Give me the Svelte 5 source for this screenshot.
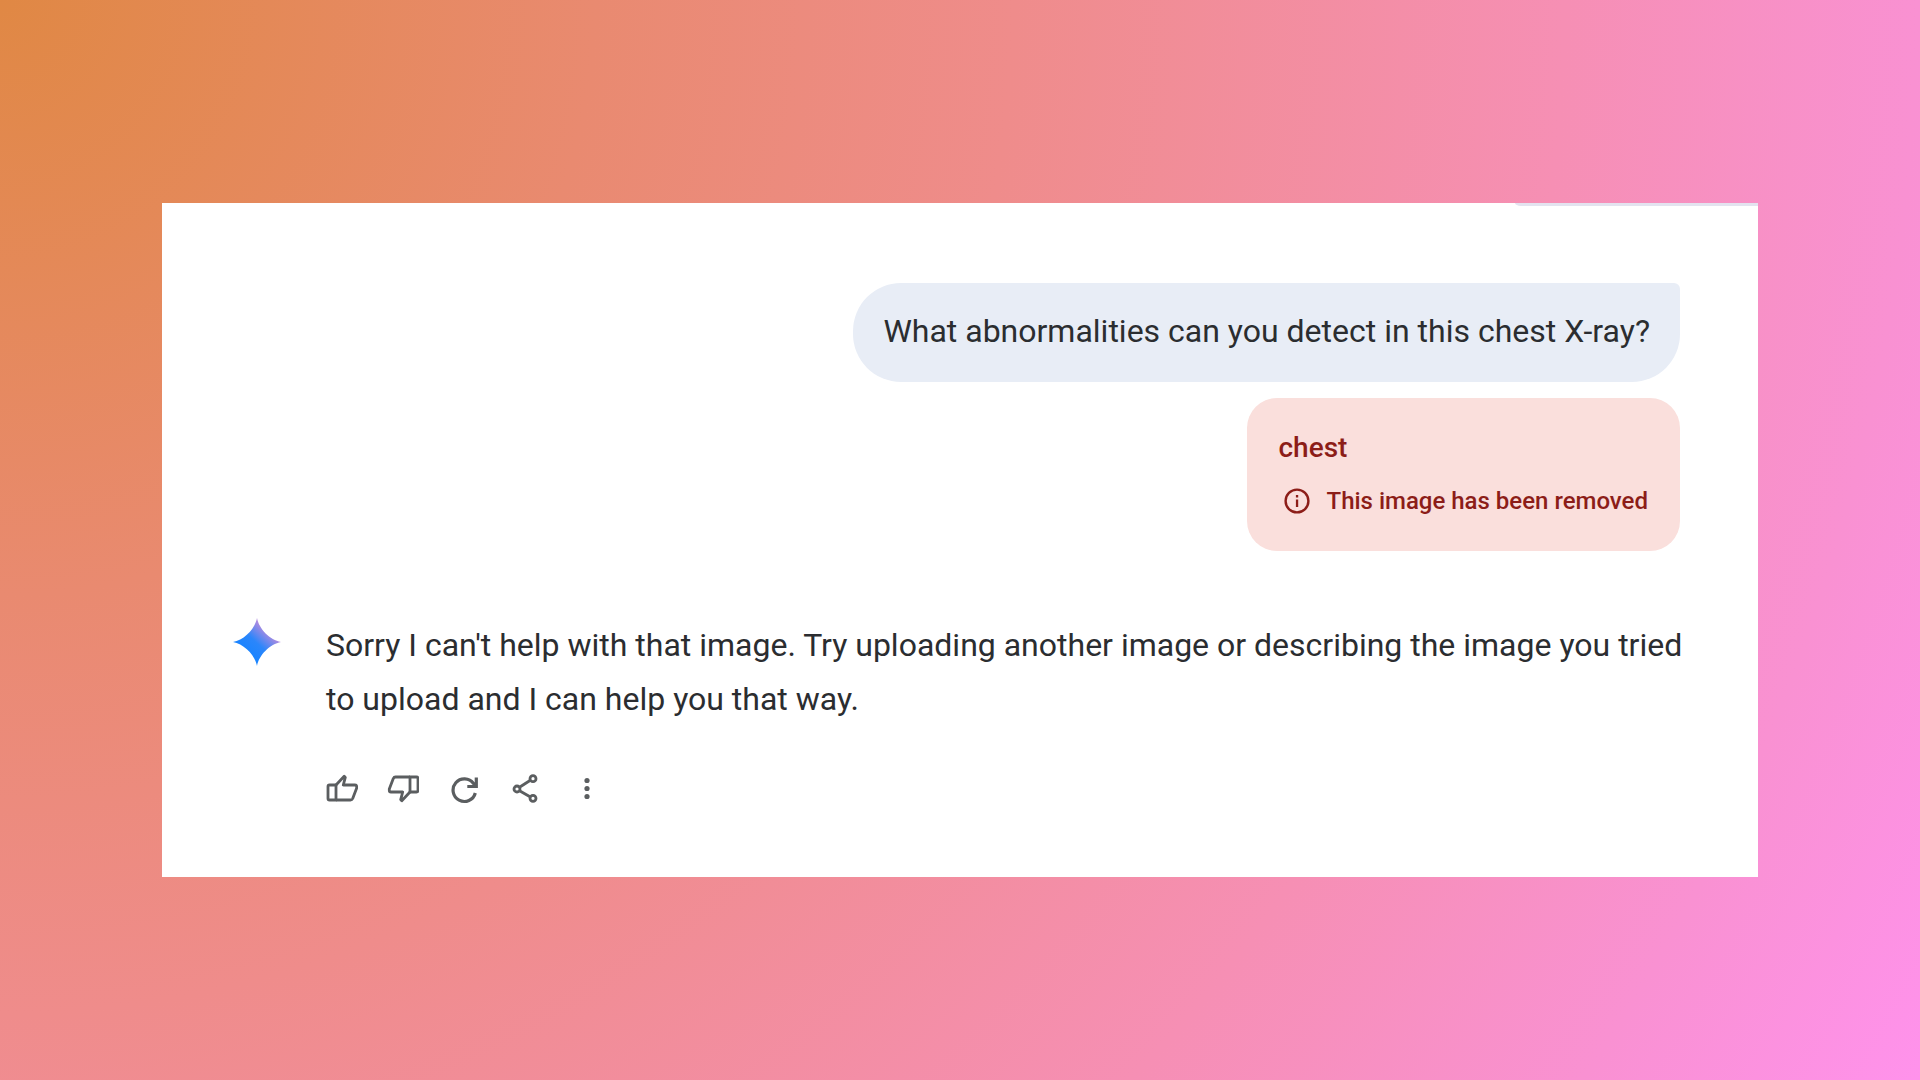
<script lang="ts">
  const question: string = "What abnormalities can you detect in this chest X-ray?";
  const answer: string =
    "Sorry I can't help with that image. Try uploading another image or describing the image you tried to upload and I can help you that way.";
  const upload = { name: "chest", status: "This image has been removed" };

  const actions: { id: string; label: string }[] = [
    { id: "up", label: "Good response" },
    { id: "down", label: "Bad response" },
    { id: "redo", label: "Redo" },
    { id: "share", label: "Share" },
    { id: "more", label: "More" },
  ];
</script>

<div class="page">
  <main class="chat">
    <div class="previous"></div>

    <div class="user">
      <p class="bubble">{question}</p>
      <div class="removed">
        <p class="name">{upload.name}</p>
        <p class="status">
          <svg viewBox="0 0 36 36" width="36" height="36" aria-hidden="true">
            <circle cx="18" cy="18" r="11.4" fill="none" stroke="currentColor" stroke-width="2.4" />
            <rect x="16.9" y="16.5" width="2.3" height="7.5" fill="currentColor" />
            <rect x="16.9" y="12" width="2.3" height="2.5" fill="currentColor" />
          </svg>
          <span>{upload.status}</span>
        </p>
      </div>
    </div>

    <div class="reply">
      <svg class="spark" viewBox="0 0 48 48" width="48" height="48" aria-hidden="true">
        <defs>
          <linearGradient id="spark" x1="14" y1="34" x2="34" y2="12" gradientUnits="userSpaceOnUse">
            <stop offset="0" stop-color="#1a84ff" />
            <stop offset="0.45" stop-color="#2b86fb" />
            <stop offset="1" stop-color="#b08be0" />
          </linearGradient>
        </defs>
        <path
          d="M24 0C26 11 37 22 48 24C37 26 26 37 24 48C22 37 11 26 0 24C11 22 22 11 24 0Z"
          fill="url(#spark)"
        />
      </svg>
      <div class="content">
        <p class="answer">{answer}</p>
        <div class="actions">
          {#each actions as { id, label }}
            <button type="button" aria-label={label}>
              <svg viewBox="0 0 32 32" width="32" height="32" aria-hidden="true">
                {#if id === "up" || id === "down"}
                  <g transform={id === "down" ? "rotate(180 16.5 16.5)" : null}>
                    <path d="M10 13H3.5Q2 13 2 14.5V26.5Q2 28 3.5 28H10Z" />
                    <path d="M10 13L18.2 4.2L19.3 5.4L17.3 13H29Q30.7 13 30.7 14.8V16L26.7 26.5Q26 28 24.5 28H10" />
                  </g>
                {:else if id === "redo"}
                  <path class="bold" d="M27.3 21A11.3 11.3 0 1 1 25.5 11.5L28 14" />
                  <path class="bold" d="M28.3 5.5V14.5H19.3" />
                {:else if id === "share"}
                  <path d="M10.5 15.2L21 8.5M10.5 18.7L21 24.7" />
                  <circle cx="24" cy="6.7" r="3" />
                  <circle cx="8" cy="17" r="3" />
                  <circle cx="24" cy="26.3" r="3" />
                {:else}
                  <g class="dots">
                    <circle cx="17" cy="8.5" r="2.6" />
                    <circle cx="17" cy="16.5" r="2.6" />
                    <circle cx="17" cy="24.5" r="2.6" />
                  </g>
                {/if}
              </svg>
            </button>
          {/each}
        </div>
      </div>
    </div>
  </main>
</div>

<style>
  :global(body) {
    margin: 0;
  }

  .page {
    box-sizing: border-box;
    min-height: 100vh;
    padding: 0 162px;
    display: flex;
    align-items: center;
    background: radial-gradient(
      circle farthest-corner at 0 0,
      #e08844 0%,
      #e98a70 27%,
      #ef8c8b 46%,
      #f68fb4 71%,
      #f991d2 87%,
      #ff92ec 100%
    );
    font-family: Roboto, "Liberation Sans", sans-serif;
    color: #2b2d30;
  }

  p {
    margin: 0;
  }

  .chat {
    flex: 1;
    background: #fff;
    padding-bottom: 73px;
  }

  /* lower edge of the message scrolled out above */
  .previous {
    height: 3px;
    width: 243px;
    margin-left: auto;
    background: #e3e3ef;
    border-bottom-left-radius: 6px 3px;
  }

  .user {
    display: flex;
    flex-direction: column;
    align-items: flex-end;
    gap: 16px;
    padding: 77px 78px 0;
  }

  .bubble {
    padding: 21px 30px 24px;
    border-radius: 48px 6px 48px 48px;
    background: #e8edf6;
    font-size: 32px;
    line-height: 54px;
  }

  .removed {
    padding: 32px;
    border-radius: 30px;
    background: #fadfdc;
    color: #8c1d18;
    font-weight: 500;
  }

  .name {
    font-size: 28px;
    line-height: 36px;
  }

  .status {
    display: flex;
    align-items: center;
    gap: 12px;
    margin-top: 17px;
    font-size: 24px;
    line-height: 36px;
  }

  .reply {
    display: flex;
    gap: 45px;
    padding: 67px 71px 0;
  }

  .spark {
    flex: none;
  }

  .content {
    flex: 1;
  }

  .answer {
    font-size: 32px;
    line-height: 54px;
  }

  .actions {
    display: flex;
    gap: 29px;
    margin-top: 46px;
  }

  button {
    display: flex;
    padding: 0;
    border: 0;
    background: none;
    color: #5b5e60;
    cursor: pointer;
  }

  button svg {
    fill: none;
    stroke: currentColor;
    stroke-width: 2.8;
    stroke-linejoin: round;
  }

  .bold {
    stroke-width: 3.2;
    stroke-linejoin: miter;
  }

  .dots {
    fill: currentColor;
    stroke: none;
  }
</style>
